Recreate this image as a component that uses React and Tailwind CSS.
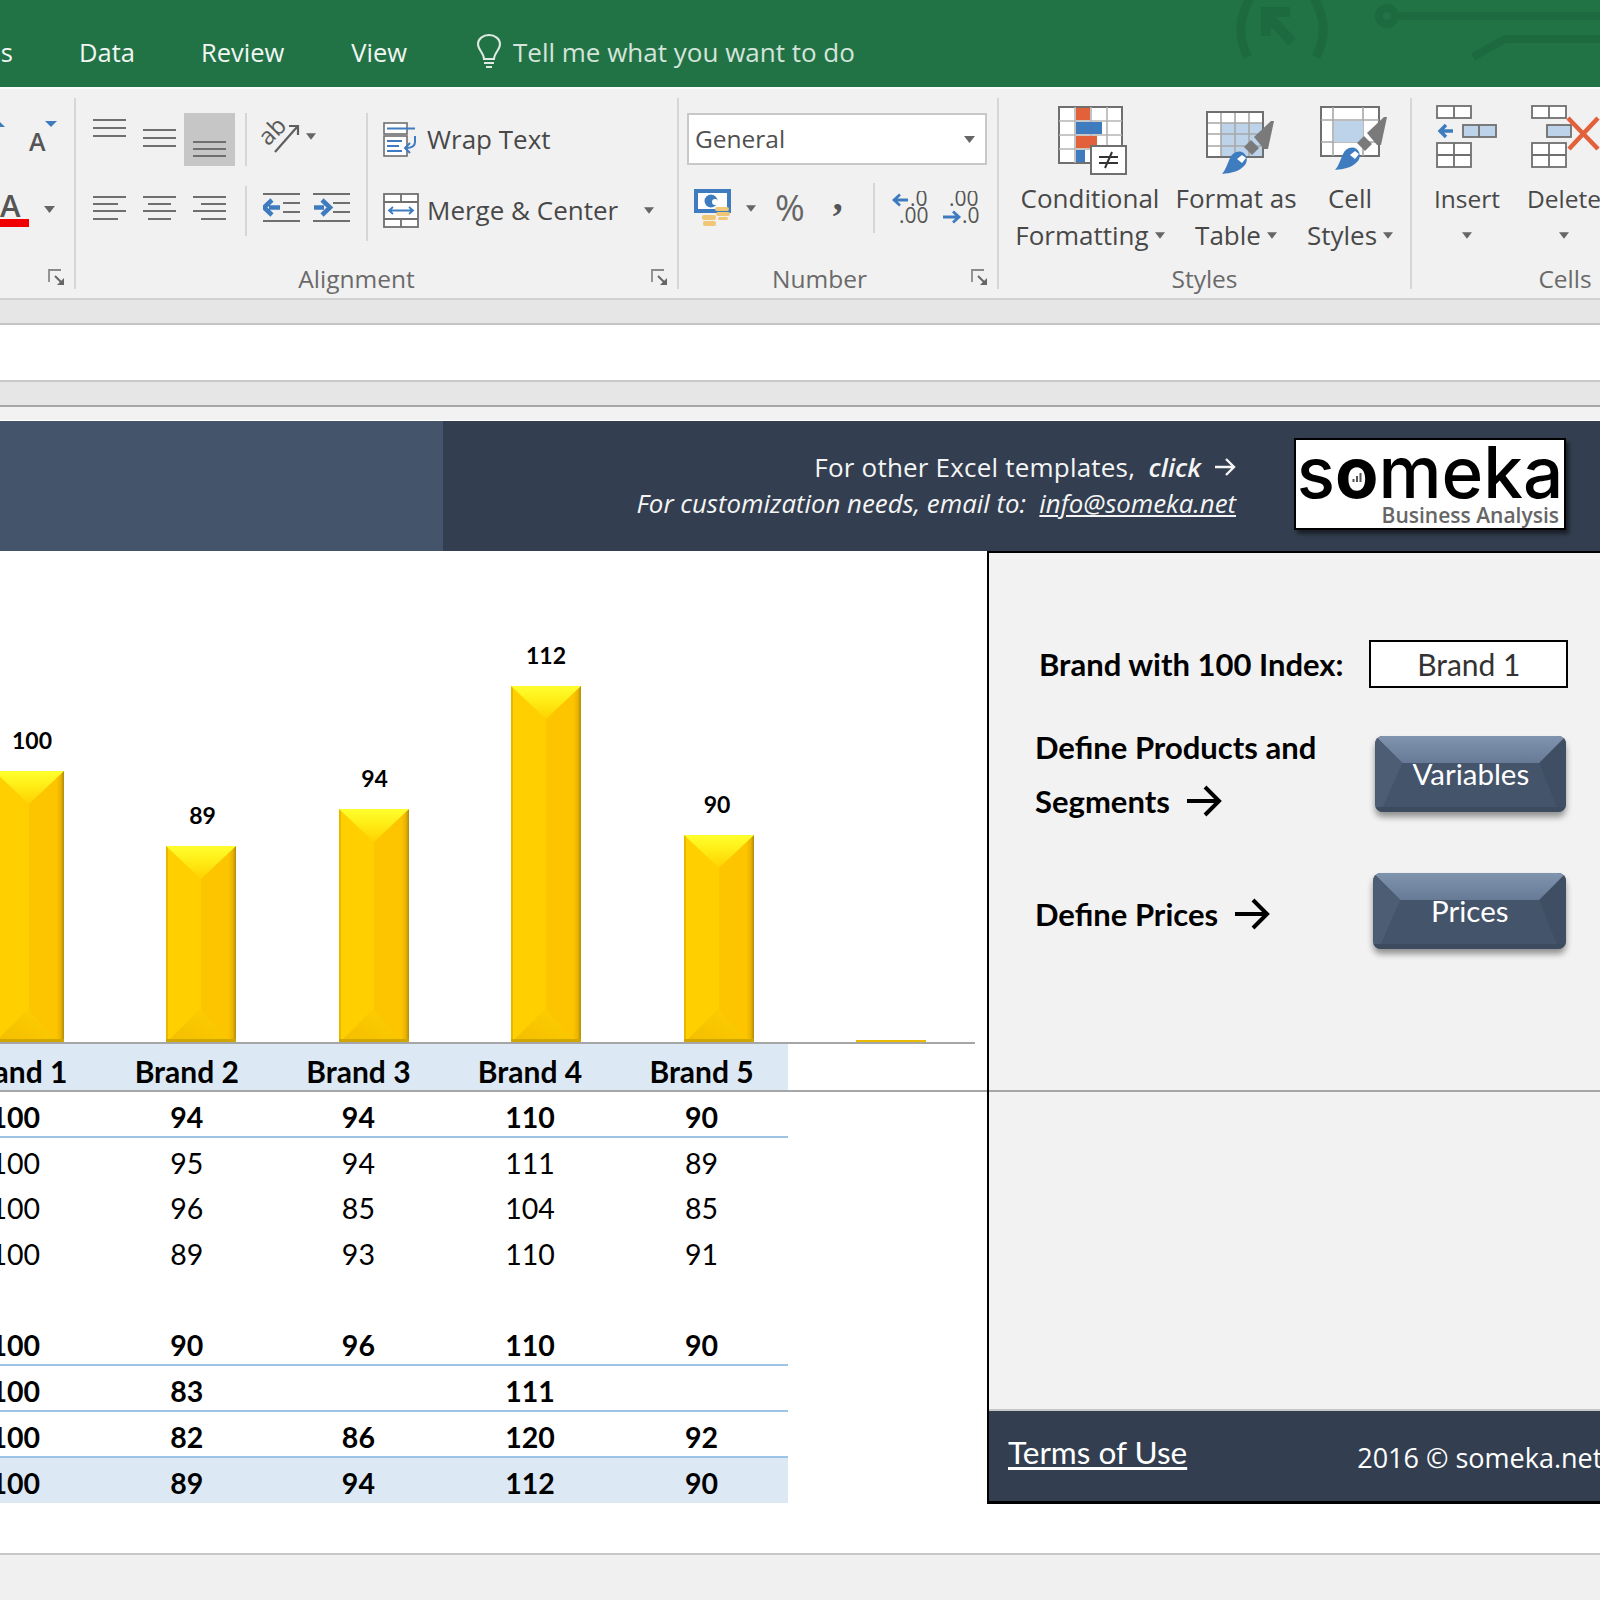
import React from "react";

const G = "#6f6f6f";
const B = "#3f7cbf";

const Caret = ({ c = "#666", s = 11 }) => (
  <svg width={s} height={7} viewBox="0 0 11 7" className="shrink-0"><path d="M0 0H11L5.500 7Z" fill={c} /></svg>
);

const Launcher = () => (
  <svg width="17" height="17" viewBox="0 0 17 17">
    <path d="M1 13V1H13" fill="none" stroke="#8a8a8a" strokeWidth="1.800" />
    <path d="M7 7L14 14" stroke="#666" strokeWidth="2" />
    <path d="M16 9V16H9Z" fill="#666" />
  </svg>
);

const Lines = ({ ys, xs, w = 33, h = 24 }) => (
  <svg width={w} height={h} viewBox={`0 0 ${w} ${h}`}>
    {ys.map((y, i) => (
      <line key={i} x1={xs[i][0]} x2={xs[i][1]} y1={y} y2={y} stroke={G} strokeWidth="2" />
    ))}
  </svg>
);

const Indent = ({ right }) => (
  <svg width="37" height="31" viewBox="0 0 37 31">
    <g stroke={G} strokeWidth="2">
      <line x1="0" x2="37" y1="2" y2="2" />
      <line x1="20" x2="37" y1="11" y2="11" />
      <line x1="20" x2="37" y1="20" y2="20" />
      <line x1="0" x2="37" y1="29" y2="29" />
    </g>
    {right ? (
      <path d="M1 15.500H11M9 8L17 15.500L9 23" fill="none" stroke={B} strokeWidth="4.500" />
    ) : (
      <path d="M17 15.500H6M9 8L1 15.500L9 23" fill="none" stroke={B} strokeWidth="4.500" />
    )}
  </svg>
);

const Orient = () => (
  <svg width="40" height="36" viewBox="0 0 40 36">
    <text x="13" y="20" textAnchor="middle" transform="rotate(-45 13 13)" fontSize="24" fontWeight="500" fill="#5a5a5a" fontFamily="Open Sans, sans-serif">ab</text>
    <path d="M15 33L37 8M29 7H38V16" fill="none" stroke="#5f5f5f" strokeWidth="2.200" />
  </svg>
);

const Wrap = () => (
  <svg width="36" height="35" viewBox="0 0 36 35">
    <rect x="1" y="1" width="23" height="11" fill="#fff" stroke={G} strokeWidth="1.600" />
    <rect x="1" y="14" width="23" height="20" fill="#fff" stroke={G} strokeWidth="1.600" />
    <path d="M4 6.500H32M4 19H19M4 24H16M4 29H19" stroke={B} strokeWidth="2" />
    <path d="M32 14V20C32 25 28 26 23 26M27 21L22 26L27 31" fill="none" stroke={B} strokeWidth="2" />
  </svg>
);

const Merge = () => (
  <svg width="36" height="35" viewBox="0 0 36 35">
    <rect x="1" y="1" width="34" height="33" fill="#fff" stroke={G} strokeWidth="1.800" />
    <path d="M1 9H35M1 26H35M18 1V9M18 26V34" stroke={G} strokeWidth="1.800" />
    <path d="M6 17.500H30M10 14L6 17.500L10 21M26 14L30 17.500L26 21" fill="none" stroke={B} strokeWidth="1.800" />
  </svg>
);

const Currency = () => (
  <svg width="38" height="39" viewBox="0 0 38 39">
    <rect x="0" y="0" width="37" height="24" fill={B} />
    <rect x="4" y="4" width="29" height="16" fill="#fff" />
    <circle cx="17" cy="12" r="6.500" fill={B} />
    <circle cx="21" cy="13" r="3" fill="#fff" />
    <rect x="21" y="18" width="14" height="4" rx="2" fill="#efc777" />
    <rect x="22" y="23" width="14" height="4" rx="2" fill="#efc777" />
    <rect x="8" y="26" width="14" height="5" rx="2" fill="#efc777" />
    <rect x="9" y="32" width="13" height="5" rx="2" fill="#efc777" />
    <rect x="24" y="28" width="10" height="3" rx="1.500" fill="#efc777" />
  </svg>
);

const Dec = ({ inc }) => (
  <svg width="36" height="34" viewBox="0 0 36 34" fontFamily="Open Sans, sans-serif" fontSize="21" fill="#555">
    {inc ? (
      <>
        <text x="18" y="15">.0</text>
        <text x="7" y="32">.00</text>
        <path d="M16 9H3M8 3.500L2 9L8 14.500" fill="none" stroke={B} strokeWidth="2.800" />
      </>
    ) : (
      <>
        <text x="6" y="15">.00</text>
        <text x="19" y="32">.0</text>
        <path d="M0 26H15M10 20.500L16 26L10 31.500" fill="none" stroke={B} strokeWidth="2.800" />
      </>
    )}
  </svg>
);

const Brush = ({ x, y }) => (
  <g>
    <path d={`M${x} ${y}C${x + 9} ${y - 1} ${x + 17} ${y - 2} ${x + 23} ${y - 9}C${x + 28} ${y - 16} ${x + 22} ${y - 25} ${x + 14} ${y - 22}C${x + 6} ${y - 19} ${x + 7} ${y - 8} ${x} ${y}Z`} fill={B} />
    <path d={`M${x + 15} ${y - 15}l5 -4l4 3l-4 5z`} fill="#fff" />
    <path d={`M${x + 22} ${y - 27}l7 -7l8 8l-7 7z`} fill="#7a7a7a" />
    <path d={`M${x + 32} ${y - 37}l17 -16l3 0l-6 28l-4 0z`} fill="#7a7a7a" />
  </g>
);

const CF = () => (
  <svg width="70" height="70" viewBox="0 0 70 70">
    <rect x="1" y="1" width="63" height="56" fill="#fff" stroke={G} strokeWidth="2" />
    <path d="M17 1V57M33 1V57M49 1V57M1 15H64M1 29H64M1 43H64" stroke="#b5b5b5" strokeWidth="1.600" />
    <rect x="18" y="2" width="14" height="12" fill="#e2603a" />
    <rect x="18" y="16" width="26" height="12" fill={B} />
    <rect x="18" y="30" width="21" height="12" fill="#e2603a" />
    <rect x="18" y="44" width="9" height="12" fill={B} />
    <rect x="33" y="40" width="35" height="28" fill="#fff" stroke={G} strokeWidth="2" />
    <path d="M41 51H60M41 57H60M54 46L47 62" stroke="#333" strokeWidth="2" />
  </svg>
);

const Fat = () => (
  <svg width="70" height="70" viewBox="0 0 70 70">
    <rect x="2" y="6" width="56" height="45" fill="#fff" stroke={G} strokeWidth="2" />
    <rect x="16" y="17" width="42" height="34" fill="#bdd3ea" />
    <path d="M16 6V51M30 6V51M44 6V51M2 17H58M2 28H58M2 40H58" stroke="#a8a8a8" strokeWidth="1.600" />
    <rect x="2" y="6" width="56" height="45" fill="none" stroke={G} strokeWidth="2" />
    <Brush x={17} y={68} />
  </svg>
);

const CellIcon = () => (
  <svg width="70" height="66" viewBox="0 0 70 66">
    <rect x="2" y="1" width="58" height="49" fill="#fff" stroke={G} strokeWidth="2" />
    <path d="M14 1V50M44 1V50M2 14H60M2 36H60" stroke="#a8a8a8" strokeWidth="1.600" />
    <rect x="15" y="15" width="29" height="21" fill="#bdd3ea" />
    <Brush x={16} y={64} />
  </svg>
);

const Cells2 = ({ x, y, r }) => (
  <g fill="#fff" stroke={G} strokeWidth="1.800">
    <rect x={x} y={y} width="34" height={r * 12} />
    <path d={`M${x + 17} ${y}V${y + r * 12}${r > 1 ? `M${x} ${y + 12}H${x + 34}` : ""}`} />
  </g>
);

const InsertIcon = () => (
  <svg width="62" height="64" viewBox="0 0 62 64">
    <Cells2 x={1} y={1} r={1} />
    <Cells2 x={1} y={38} r={2} />
    <path d="M17 26H5M10 20L4 26L10 32" fill="none" stroke={B} strokeWidth="3.400" />
    <rect x="27" y="20" width="33" height="12" fill="#bdd3ea" stroke={G} strokeWidth="1.800" />
    <path d="M43 20V32" stroke={G} strokeWidth="1.800" />
  </svg>
);

const DeleteIcon = () => (
  <svg width="70" height="64" viewBox="0 0 70 64">
    <Cells2 x={1} y={1} r={1} />
    <Cells2 x={1} y={38} r={2} />
    <rect x="16" y="20" width="24" height="12" fill="#bdd3ea" stroke={G} strokeWidth="1.800" />
    <path d="M37 13L67 44M67 13L38 44" stroke="#e2603a" strokeWidth="4.500" />
  </svg>
);

const Sep = ({ h = "h-[191px]", mt = "mt-[9px]" }) => <div className={`w-[2px] shrink-0 bg-[#d6d6d6] ${h} ${mt}`} />;

const GroupLabel = ({ children, launcher, cls = "" }) => (
  <div className={`relative h-[40px] pt-[2px] flex items-center justify-center text-[24.500px] text-[#6a6a6a] ${cls}`}>
    {children}
    {launcher && <div className="absolute right-[9px] top-[11px]"><Launcher /></div>}
  </div>
);

const StyleItem = ({ w, icon, ml, l1, l2 }) => (
  <div className={`flex flex-col items-center ${w}`}>
    <div className={`h-[91px] pt-[17px] ${ml}`}>{icon}</div>
    <div className="h-[37px] leading-[37px] whitespace-nowrap">{l1}</div>
    <div className="h-[37px] flex items-center gap-[6px] whitespace-nowrap">
      {l2}
      <Caret s={10} />
    </div>
  </div>
);

const Bar = ({ h, label, first, lc = "" }) => (
  <div className={`flex flex-col items-center w-[70px] shrink-0 ${first ? "ml-[-6.500px]" : ""}`}>
    <div className={`text-[23px] leading-[30px] font-bold text-black mb-[16px] ${lc}`}>{label}</div>
    <svg width="70" height={h} viewBox={`0 0 70 ${h}`} className="block">
      <defs>
        <linearGradient id={`t${h}`} x1="0" y1="0" x2="0" y2="1">
          <stop offset="0" stopColor="#ffff2e" />
          <stop offset="0.4" stopColor="#ffef18" />
          <stop offset="1" stopColor="#ffd200" />
        </linearGradient>
        <linearGradient id={`b${h}`} x1="0" y1="1" x2="1" y2="0">
          <stop offset="0" stopColor="#f3bd00" />
          <stop offset="1" stopColor="#ffd000" />
        </linearGradient>
        <linearGradient id={`r${h}`} x1="0" y1="0" x2="1" y2="0">
          <stop offset="0" stopColor="#fdc500" />
          <stop offset="0.6" stopColor="#eab400" />
          <stop offset="1" stopColor="#b08a10" />
        </linearGradient>
      </defs>
      <rect width="35" height={h} fill="#ffcf00" />
      <rect x="35" width="35" height={h} fill="#fdc500" />
      <rect x="62" width="8" height={h} fill={`url(#r${h})`} />
      <rect x="0" width="2" height={h} fill="#e6b800" />
      <path d={`M0 0H70L35 33Z`} fill={`url(#t${h})`} />
      <path d={`M1 ${h}L34 ${h - 33}L64 ${h}Z`} fill={`url(#b${h})`} />
      <rect y={h - 3} width="70" height="3" fill="#d0a600" />
    </svg>
  </div>
);

const Row = ({ v, bold, line, bg }) => (
  <div className={`grid grid-cols-[101px_repeat(4,171.600px)] h-[45.700px] w-[788px] items-center pt-[4px] text-[28.500px] text-black ${bold ? "font-bold" : ""} ${line ? "border-b-2 border-[#9dc3e6]" : ""} ${bg ? "bg-[#dce9f5]" : ""}`}>
    <div className="flex justify-end"><div className="w-[171.600px] shrink-0 text-center whitespace-nowrap">{v[0]}</div></div>
    {v.slice(1).map((x, i) => (
      <div key={i} className="text-center">{x}</div>
    ))}
  </div>
);

const Btn = ({ w, label }) => (
  <div className={`relative h-[76px] ${w} rounded-[8px] bg-[#44546a] shadow-[0_5px_6px_rgba(0,0,0,0.4)] overflow-hidden flex items-center justify-center text-[29.500px] font-normal text-white`}>
    <div className="absolute inset-0 bg-[linear-gradient(180deg,#8194ae_0%,#5f7390_45%,#46566d_100%)] [clip-path:polygon(0_0,100%_0,calc(100%-27px)_27px,27px_27px)]" />
    <div className="absolute inset-0 bg-[#3f4e63] [clip-path:polygon(100%_0,100%_100%,calc(100%-10px)_calc(100%-6px),calc(100%-27px)_27px)]" />
    <div className="absolute inset-0 bg-[#4d5d74] [clip-path:polygon(0_0,0_100%,8px_calc(100%-6px),27px_27px)]" />
    <div className="absolute inset-x-0 bottom-0 h-[5px] bg-[#3d4b5f]" />
    <span className="relative">{label}</span>
  </div>
);

const Arrow = () => (
  <svg width="36" height="34" viewBox="0 0 36 34" className="shrink-0">
    <path d="M1 17H32M19 3L33 17L19 31" fill="none" stroke="#000" strokeWidth="4" />
  </svg>
);

export default function App() {
  return (
    <div className="w-[1600px] h-[1600px] overflow-hidden bg-white font-['Open_Sans',sans-serif]">
      {/* Title / tab bar */}
      <div className="relative h-[87px] bg-[#217346] flex items-center pt-[18px] text-[25.500px] text-[#f1f6f3]">
        <div className="w-[13px] flex justify-end"><span className="shrink-0">Formulas</span></div>
        <span className="ml-[66px]">Data</span>
        <span className="ml-[66px]">Review</span>
        <span className="ml-[67px]">View</span>
        <svg width="26" height="34" viewBox="0 0 26 34" className="ml-[69px] mb-[3px]">
          <path d="M8 25C8 19 2 16 2 10C2 5 7 1 13 1C19 1 24 5 24 10C24 16 18 19 18 25Z" fill="none" stroke="#dfeae3" strokeWidth="2" />
          <path d="M8 29H18M10 33H16" stroke="#dfeae3" strokeWidth="2" />
        </svg>
        <span className="ml-[11px] text-[26px] text-[#d5e4da]">Tell me what you want to do</span>
        <svg width="370" height="87" viewBox="0 0 370 87" className="absolute right-0 top-0">
          <g fill="none" stroke="#1e6a40" strokeWidth="8">
            <path d="M20 -2C8 20 8 38 18 57M84 -2C96 20 96 38 86 57" strokeWidth="9" />
            <path d="M38 16L62 42M36 36V12H60" strokeWidth="10" />
            <circle cx="157" cy="16" r="8" />
            <path d="M165 16H370M243 57L275 39H370" />
          </g>
        </svg>
      </div>

      {/* Ribbon */}
      <div className="h-[213px] bg-[#f1f1f1] border-t-2 border-[#fafafa] border-b-2 border-b-[#d2d2d2] flex text-[#484848] text-[26px]">
        {/* Font group (cut off) */}
        <div className="w-[74px] shrink-0 flex flex-col">
          <div className="h-[169px] flex flex-col">
            <div className="h-[88px] pt-[32px]">
              <svg width="60" height="34" viewBox="0 0 60 34">
                <path d="M0 1L5 6H0Z" fill={B} />
                <path d="M45 0H57L51 6Z" fill={B} />
                <text x="29" y="30" fontSize="25" fontWeight="600" fill="#555">A</text>
              </svg>
            </div>
            <div className="h-[50px] pt-[15px] flex items-center">
              <div className="w-[29px]">
                <div className="h-[27px] leading-[27px] text-[31px] text-[#555] font-semibold">A</div>
                <div className="h-[8px] bg-[#f00000]" />
              </div>
              <div className="ml-[15px]"><Caret /></div>
            </div>
          </div>
          <div className="relative h-[40px]">
            <div className="absolute right-[9px] top-[11px]"><Launcher /></div>
          </div>
        </div>
        <Sep />

        {/* Alignment */}
        <div className="w-[601px] shrink-0 flex flex-col">
          <div className="h-[169px] flex pt-[24px]">
            <div className="w-[161px] ml-[8px] grid grid-cols-[50px_50px_51px] grid-rows-[53px_52px] gap-y-[18px] justify-start">
              <div className="pl-[9px] pt-[6px]"><Lines ys={[1, 9, 17]} xs={[[0, 33], [0, 33], [0, 33]]} h={20} /></div>
              <div className="pl-[9px] pt-[16px]"><Lines ys={[1, 9, 17]} xs={[[0, 33], [0, 33], [0, 33]]} h={20} /></div>
              <div className="bg-[#c6c6c6] pl-[9px] pt-[28px]"><Lines ys={[1, 8, 15]} xs={[[0, 33], [0, 33], [0, 33]]} h={18} /></div>
              <div className="pl-[9px] pt-[12px]"><Lines ys={[1, 8, 15, 23]} xs={[[0, 33], [0, 25], [0, 33], [0, 25]]} /></div>
              <div className="pl-[9px] pt-[12px]"><Lines ys={[1, 8, 15, 23]} xs={[[0, 33], [5, 28], [0, 33], [5, 28]]} /></div>
              <div className="pl-[9px] pt-[12px]"><Lines ys={[1, 8, 15, 23]} xs={[[0, 33], [8, 33], [0, 33], [8, 33]]} /></div>
            </div>
            <div className="w-[2px] h-[123px] flex flex-col gap-[20px]">
              <div className="h-[53px] bg-[#d6d6d6]" />
              <div className="h-[50px] bg-[#d6d6d6]" />
            </div>
            <div className="w-[119px] grid grid-rows-[53px_52px] gap-y-[18px] pl-[16px] content-start">
              <div className="flex items-center gap-[6px] mb-[6px] ml-[-3px]">
                <Orient />
                <Caret s={10} />
              </div>
              <div className="flex gap-[13px] pt-[8px]">
                <Indent />
                <Indent right />
              </div>
            </div>
            <div className="w-[2px] h-[128px] bg-[#d6d6d6]" />
            <div className="flex-1 grid grid-rows-[53px_52px] gap-y-[18px] pl-[15px] content-start">
              <div className="flex items-center gap-[8px]">
                <Wrap />
                <span>Wrap Text</span>
              </div>
              <div className="flex items-center gap-[8px]">
                <Merge />
                <span>Merge &amp; Center</span>
                <div className="ml-[18px]"><Caret s={10} /></div>
              </div>
            </div>
          </div>
          <GroupLabel launcher cls="pr-[40px]">Alignment</GroupLabel>
        </div>
        <Sep />

        {/* Number */}
        <div className="w-[318px] shrink-0 flex flex-col">
          <div className="h-[169px] pl-[8px] pt-[24px]">
            <div className="w-[300px] h-[52px] bg-white border-2 border-[#c8c8c8] flex items-center justify-between pl-[6px] pr-[10px] text-[24.500px] text-[#505050]">
              <span>General</span>
              <Caret />
            </div>
            <div className="flex items-center mt-[18px] h-[50px] pl-[7px]">
              <Currency />
              <div className="ml-[14px]"><Caret s={10} /></div>
              <span className="ml-[19px] text-[36px] leading-none text-[#666]">%</span>
              <span className="ml-[28px] text-[40px] leading-none font-bold text-[#555] mb-[22px] font-['Liberation_Serif',serif]">,</span>
              <div className="ml-[30px] w-[2px] h-[50px] bg-[#d6d6d6]" />
              <div className="ml-[17px]"><Dec inc /></div>
              <div className="ml-[15px]"><Dec /></div>
            </div>
          </div>
          <GroupLabel launcher cls="pr-[37px]">Number</GroupLabel>
        </div>
        <Sep />

        {/* Styles */}
        <div className="w-[411px] shrink-0 flex flex-col">
          <div className="h-[169px] pl-[7px] flex">
            <StyleItem w="w-[168px]" ml="ml-[6px]" icon={<CF />} l1="Conditional" l2="Formatting" />
            <StyleItem w="w-[124px]" ml="ml-[8px]" icon={<Fat />} l1="Format as" l2="Table" />
            <StyleItem w="w-[104px]" ml="ml-[8px]" icon={<CellIcon />} l1="Cell" l2="Styles" />
          </div>
          <GroupLabel>Styles</GroupLabel>
        </div>
        <Sep />

        {/* Cells */}
        <div className="w-[306px] shrink-0 flex flex-col">
          <div className="h-[169px] flex text-[24.500px]">
            <div className="w-[110px] flex flex-col items-center">
              <div className="h-[91px] pt-[16px]"><InsertIcon /></div>
              <div className="h-[37px] leading-[37px]">Insert</div>
              <div className="h-[37px] flex items-center justify-center"><Caret s={10} /></div>
            </div>
            <div className="w-[84px] flex flex-col items-center">
              <div className="h-[91px] pt-[16px] self-start pl-[9px]"><DeleteIcon /></div>
              <div className="h-[37px] leading-[37px]">Delete</div>
              <div className="h-[37px] flex items-center justify-center"><Caret s={10} /></div>
            </div>
          </div>
          <GroupLabel>Cells</GroupLabel>
        </div>
      </div>

      {/* strips */}
      <div className="h-[25px] bg-[#e6e6e6] border-b-2 border-[#c4c4c4]" />
      <div className="h-[57px] bg-white border-b-2 border-[#c8c8c8]" />
      <div className="h-[25px] bg-[#e6e6e6] border-b-2 border-[#a6a6a6]" />
      <div className="h-[14px] bg-[#f2f2f2] border-b border-white" />

      {/* Sheet banner */}
      <div className="h-[130px] flex">
        <div className="w-[443px] bg-[#44546a]" />
        <div className="flex-1 bg-[#333f50] flex items-center justify-end pr-[34px] gap-[58px] text-[#f5f5f5]">
          <div className="text-right text-[26px] leading-[36px] mb-[2px]">
            <div className="flex items-center justify-end whitespace-nowrap">
              <span className="tracking-[0.2px]">For other Excel templates,</span>&nbsp;&nbsp;<i className="font-semibold">click</i>
              <svg width="22" height="20" viewBox="0 0 22 20" className="ml-[13px]"><path d="M1 10H20M12 2L20 10L12 18" fill="none" stroke="#f5f5f5" strokeWidth="2.400" /></svg>
            </div>
            <div className="italic whitespace-nowrap text-[25.800px]">
              For customization needs, email to:&nbsp; <u>info@someka.net</u>
            </div>
          </div>
          <div className="relative w-[272px] h-[92px] bg-white border-2 border-black shadow-[3px_4px_4px_rgba(0,0,0,0.5)] flex flex-col items-center overflow-hidden mb-[4px]">
            <div className="text-[71px] leading-[64px] text-black font-medium h-[64px] font-['Inter',sans-serif]">s<span className="font-bold">o</span>meka</div>
            <svg width="10" height="9" viewBox="0 0 10 9" className="absolute left-[56px] top-[33px]">
              <path d="M1.500 9V6M5 9V3M8.500 9V0" stroke="#555" strokeWidth="2" />
            </svg>
            <div className="self-end pr-[5px] text-[21px] leading-[22px] font-semibold text-[#666]">Business Analysis</div>
          </div>
        </div>
      </div>

      {/* Main */}
      <div className="flex font-['Lato',sans-serif]">
        <div className="w-[987px] shrink-0">
          <div className="w-[975px] h-[493px] border-b-2 border-[#a6a6a6] flex items-end gap-[102.500px]">
            <Bar first h={271} label="100" lc="ml-[7px]" />
            <Bar h={196} label="89" lc="ml-[3px]" />
            <Bar h={233} label="94" lc="ml-[2px]" />
            <Bar h={356} label="112" />
            <Bar h={207} label="90" lc="mr-[3px]" />
            <div className="w-[70px] h-[2px] bg-[#e8bb00]" />
          </div>
          <div className="border-b-2 border-[#a6a6a6]">
            <div className="grid grid-cols-[101px_repeat(4,171.600px)] h-[46px] w-[788px] items-center pt-[5px] bg-[#dce9f5] text-[30px] font-bold text-black">
              <div className="flex justify-end"><div className="w-[171.600px] shrink-0 text-center whitespace-nowrap">Brand 1</div></div>
              <div className="text-center">Brand 2</div>
              <div className="text-center">Brand 3</div>
              <div className="text-center">Brand 4</div>
              <div className="text-center">Brand 5</div>
            </div>
          </div>
          <Row bold line v={[100, 94, 94, 110, 90]} />
          <Row v={[100, 95, 94, 111, 89]} />
          <Row v={[100, 96, 85, 104, 85]} />
          <Row v={[100, 89, 93, 110, 91]} />
          <Row v={["", "", "", "", ""]} />
          <Row bold line v={[100, 90, 96, 110, 90]} />
          <Row bold line v={[100, 83, "", 111, ""]} />
          <Row bold line v={[100, 82, 86, 120, 92]} />
          <Row bold bg v={[100, 89, 94, 112, 90]} />
        </div>

        <div className="flex-1 h-[953px] bg-[#f2f2f2] border-l-2 border-t-2 border-black flex flex-col">
          <div className="h-[539px] border-b-2 border-[#a6a6a6] pl-[46px] pr-[34px] pt-[87px] text-[31px] font-bold text-black">
            <div className="flex items-center justify-between h-[48px]">
              <span className="ml-[4px] whitespace-nowrap">Brand with 100 Index:</span>
              <div className="w-[199px] h-[48px] bg-white border-2 border-black flex items-center justify-center font-normal text-[30px] text-[#333]">Brand 1</div>
            </div>
            <div className="flex items-center justify-between mt-[48px] pr-[2px] h-[76px]">
              <div className="leading-[54px] whitespace-nowrap">
                <div>Define Products and</div>
                <div className="flex items-center gap-[16px]">Segments <Arrow /></div>
              </div>
              <Btn w="w-[191px]" label="Variables" />
            </div>
            <div className="flex items-center justify-between mt-[61px] pr-[2px]">
              <div className="flex items-center gap-[16px] pt-[6px]">Define Prices <Arrow /></div>
              <Btn w="w-[193px]" label="Prices" />
            </div>
          </div>
          <div className="flex-1" />
          <div className="h-[95px] bg-[#333f50] border-t-2 border-[#c8c8c8] border-b-[3px] border-b-black flex pl-[19px] text-white">
            <u className="text-[31.500px] mt-[18px] underline-offset-[3px] whitespace-nowrap">Terms of Use</u>
            <span className="ml-[170px] mt-[27px] text-[27px] font-['Open_Sans',sans-serif] whitespace-nowrap">2016 © someka.net</span>
          </div>
        </div>
      </div>

      <div className="h-[49px] bg-white" />
      <div className="h-[2px] bg-[#c8c8c8]" />
      <div className="h-[60px] bg-[#f0f0f0]" />
    </div>
  );
}
